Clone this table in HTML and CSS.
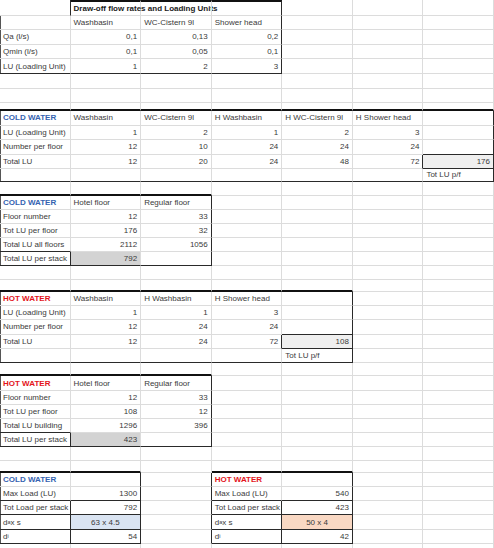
FILE: index.html
```html
<!DOCTYPE html>
<html lang="en">
<head>
    <meta charset="UTF-8">
    <meta name="viewport" content="width=device-width, initial-scale=1.0">
    <title>Draw-off flow rates and Loading Units</title>
    <link rel="stylesheet" href="styles.css">
</head>
<body>
    <div class="sheet">
        <!-- Draw-off flow rates -->
        <div class="row h155">
            <div class="c r"></div>
            <div class="c t2 title">Draw-off flow rates and Loading Units</div>
            <div class="c t2"></div>
            <div class="c t2 r"></div>
            <div class="c"></div><div class="c"></div><div class="c"></div>
        </div>
        <div class="row h145">
            <div class="c l"></div>
            <div class="c">Washbasin</div>
            <div class="c">WC-Cistern 9l</div>
            <div class="c r">Shower head</div>
            <div class="c"></div><div class="c"></div><div class="c"></div>
        </div>
        <div class="row h145">
            <div class="c l">Qa (l/s)</div>
            <div class="c num">0,1</div>
            <div class="c num">0,13</div>
            <div class="c num r">0,2</div>
            <div class="c"></div><div class="c"></div><div class="c"></div>
        </div>
        <div class="row h145">
            <div class="c l">Qmin (l/s)</div>
            <div class="c num">0,1</div>
            <div class="c num">0,05</div>
            <div class="c num r">0,1</div>
            <div class="c"></div><div class="c"></div><div class="c"></div>
        </div>
        <div class="row h15">
            <div class="c l b">LU (Loading Unit)</div>
            <div class="c num b">1</div>
            <div class="c num b">2</div>
            <div class="c num r b">3</div>
            <div class="c"></div><div class="c"></div><div class="c"></div>
        </div>
        <div class="row h15">
            <div class="c"></div><div class="c"></div><div class="c"></div><div class="c"></div><div class="c"></div><div class="c"></div><div class="c"></div>
        </div>
        <div class="row h14">
            <div class="c"></div><div class="c"></div><div class="c"></div><div class="c"></div><div class="c"></div><div class="c"></div><div class="c"></div>
        </div>
        <div class="row h8">
            <div class="c bb"></div><div class="c bb"></div><div class="c bb"></div><div class="c bb"></div><div class="c bb"></div><div class="c bb"></div><div class="c bb"></div>
        </div>

        <!-- Cold water per floor -->
        <div class="row h145">
            <div class="c l cold">COLD WATER</div>
            <div class="c">Washbasin</div>
            <div class="c">WC-Cistern 9l</div>
            <div class="c">H Washbasin</div>
            <div class="c">H WC-Cistern 9l</div>
            <div class="c">H Shower head</div>
            <div class="c r"></div>
        </div>
        <div class="row h145">
            <div class="c l">LU (Loading Unit)</div>
            <div class="c num">1</div>
            <div class="c num">2</div>
            <div class="c num">1</div>
            <div class="c num">2</div>
            <div class="c num">3</div>
            <div class="c r"></div>
        </div>
        <div class="row h145">
            <div class="c l">Number per floor</div>
            <div class="c num">12</div>
            <div class="c num">10</div>
            <div class="c num">24</div>
            <div class="c num">24</div>
            <div class="c num">24</div>
            <div class="c r b"></div>
        </div>
        <div class="row h14">
            <div class="c l">Total LU</div>
            <div class="c num">12</div>
            <div class="c num">20</div>
            <div class="c num">24</div>
            <div class="c num">48</div>
            <div class="c num r">72</div>
            <div class="c num r b g1">176</div>
        </div>
        <div class="row h135">
            <div class="c l b"></div>
            <div class="c b"></div>
            <div class="c b"></div>
            <div class="c b"></div>
            <div class="c b"></div>
            <div class="c b"></div>
            <div class="c r b">Tot LU p/f</div>
        </div>
        <div class="row h14">
            <div class="c bb"></div><div class="c bb"></div><div class="c bb"></div>
            <div class="c"></div><div class="c"></div><div class="c"></div><div class="c"></div>
        </div>

        <!-- Cold water per stack -->
        <div class="row h14">
            <div class="c l cold">COLD WATER</div>
            <div class="c">Hotel floor</div>
            <div class="c r">Regular floor</div>
            <div class="c"></div><div class="c"></div><div class="c"></div><div class="c"></div>
        </div>
        <div class="row h14">
            <div class="c l">Floor number</div>
            <div class="c num">12</div>
            <div class="c num r">33</div>
            <div class="c"></div><div class="c"></div><div class="c"></div><div class="c"></div>
        </div>
        <div class="row h14">
            <div class="c l">Tot LU per floor</div>
            <div class="c num">176</div>
            <div class="c num r">32</div>
            <div class="c"></div><div class="c"></div><div class="c"></div><div class="c"></div>
        </div>
        <div class="row h14">
            <div class="c l b">Total LU all floors</div>
            <div class="c num">2112</div>
            <div class="c num r">1056</div>
            <div class="c"></div><div class="c"></div><div class="c"></div><div class="c"></div>
        </div>
        <div class="row h14">
            <div class="c l r b">Total LU per stack</div>
            <div class="c num b g2">792</div>
            <div class="c r b"></div>
            <div class="c"></div><div class="c"></div><div class="c"></div><div class="c"></div>
        </div>
        <div class="row h14">
            <div class="c"></div><div class="c"></div><div class="c"></div><div class="c"></div><div class="c"></div><div class="c"></div><div class="c"></div>
        </div>
        <div class="row h12">
            <div class="c bb"></div><div class="c bb"></div><div class="c bb"></div><div class="c bb"></div><div class="c bb"></div>
            <div class="c"></div><div class="c"></div>
        </div>

        <!-- Hot water per floor -->
        <div class="row h142">
            <div class="c l hot">HOT WATER</div>
            <div class="c">Washbasin</div>
            <div class="c">H Washbasin</div>
            <div class="c">H Shower head</div>
            <div class="c r"></div>
            <div class="c"></div><div class="c"></div>
        </div>
        <div class="row h142">
            <div class="c l">LU (Loading Unit)</div>
            <div class="c num">1</div>
            <div class="c num">1</div>
            <div class="c num">3</div>
            <div class="c r"></div>
            <div class="c"></div><div class="c"></div>
        </div>
        <div class="row h142">
            <div class="c l">Number per floor</div>
            <div class="c num">12</div>
            <div class="c num">24</div>
            <div class="c num">24</div>
            <div class="c r b"></div>
            <div class="c"></div><div class="c"></div>
        </div>
        <div class="row h142">
            <div class="c l">Total LU</div>
            <div class="c num">12</div>
            <div class="c num">24</div>
            <div class="c num r">72</div>
            <div class="c num r b g1">108</div>
            <div class="c"></div><div class="c"></div>
        </div>
        <div class="row h142">
            <div class="c l b"></div>
            <div class="c b"></div>
            <div class="c b"></div>
            <div class="c b"></div>
            <div class="c r b">Tot LU p/f</div>
            <div class="c"></div><div class="c"></div>
        </div>
        <div class="row h135">
            <div class="c bb"></div><div class="c bb"></div><div class="c bb"></div>
            <div class="c"></div><div class="c"></div><div class="c"></div><div class="c"></div>
        </div>

        <!-- Hot water per stack -->
        <div class="row h142">
            <div class="c l hot">HOT WATER</div>
            <div class="c">Hotel floor</div>
            <div class="c r">Regular floor</div>
            <div class="c"></div><div class="c"></div><div class="c"></div><div class="c"></div>
        </div>
        <div class="row h142">
            <div class="c l">Floor number</div>
            <div class="c num">12</div>
            <div class="c num r">33</div>
            <div class="c"></div><div class="c"></div><div class="c"></div><div class="c"></div>
        </div>
        <div class="row h142">
            <div class="c l">Tot LU per floor</div>
            <div class="c num">108</div>
            <div class="c num r">12</div>
            <div class="c"></div><div class="c"></div><div class="c"></div><div class="c"></div>
        </div>
        <div class="row h142">
            <div class="c l b">Total LU building</div>
            <div class="c num">1296</div>
            <div class="c num r">396</div>
            <div class="c"></div><div class="c"></div><div class="c"></div><div class="c"></div>
        </div>
        <div class="row h142">
            <div class="c l r b">Total LU per stack</div>
            <div class="c num b g2">423</div>
            <div class="c r b"></div>
            <div class="c"></div><div class="c"></div><div class="c"></div><div class="c"></div>
        </div>
        <div class="row h14">
            <div class="c"></div><div class="c"></div><div class="c"></div><div class="c"></div><div class="c"></div><div class="c"></div><div class="c"></div>
        </div>
        <div class="row h115">
            <div class="c bb"></div><div class="c bb"></div><div class="c"></div>
            <div class="c bb"></div><div class="c bb"></div><div class="c"></div><div class="c"></div>
        </div>

        <!-- Pipe sizing -->
        <div class="row h142">
            <div class="c l cold">COLD WATER</div>
            <div class="c r"></div>
            <div class="c r"></div>
            <div class="c hot">HOT WATER</div>
            <div class="c r"></div>
            <div class="c"></div><div class="c"></div>
        </div>
        <div class="row h142">
            <div class="c l b">Max Load (LU)</div>
            <div class="c num r b">1300</div>
            <div class="c r"></div>
            <div class="c b">Max Load (LU)</div>
            <div class="c num r b">540</div>
            <div class="c"></div><div class="c"></div>
        </div>
        <div class="row h142">
            <div class="c l r b">Tot Load per stack</div>
            <div class="c num r b">792</div>
            <div class="c r"></div>
            <div class="c r b">Tot Load per stack</div>
            <div class="c num r b">423</div>
            <div class="c"></div><div class="c"></div>
        </div>
        <div class="row h142">
            <div class="c l r b">d<sub>a</sub> x s</div>
            <div class="c ctr r b blue">63 x 4.5</div>
            <div class="c r"></div>
            <div class="c r b">d<sub>a</sub> x s</div>
            <div class="c ctr r b peach">50 x 4</div>
            <div class="c"></div><div class="c"></div>
        </div>
        <div class="row h142">
            <div class="c l r b">d<sub>i</sub></div>
            <div class="c num r b">54</div>
            <div class="c r"></div>
            <div class="c r b">d<sub>i</sub></div>
            <div class="c num r b">42</div>
            <div class="c"></div><div class="c"></div>
        </div>
        <div class="row h14">
            <div class="c"></div><div class="c"></div><div class="c"></div><div class="c"></div><div class="c"></div><div class="c"></div><div class="c"></div>
        </div>
    </div>
</body>
</html>
```

FILE: styles.css
```css
body {
    margin: 0;
    background-color: #fff;
    font-family: "Liberation Sans", Arial, sans-serif;
    font-size: 8px;
    color: #3a3a3a;
}
.sheet {
    width: 494px;
    height: 548px;
    overflow: hidden;
}
.row {
    display: grid;
    grid-template-columns: repeat(7, minmax(0, 1fr));
}
.h155 { height: 15.5px; }
.h15 { height: 15px; }
.h145 { height: 14.5px; }
.h142 { height: 14.2px; }
.h14 { height: 14px; }
.h135 { height: 13.5px; }
.h12 { height: 12px; }
.h115 { height: 11.5px; }
.h8 { height: 8px; }

.c {
    box-sizing: border-box;
    display: flex;
    align-items: center;
    padding: 0 3px;
    white-space: nowrap;
    min-width: 0;
    border-right: 1px solid #dcdcdc;
    border-bottom: 1px solid #dcdcdc;
}
.c sub {
    font-size: 5.5px;
    vertical-align: -1px;
    line-height: 0;
}
.num {
    justify-content: flex-end;
}
.ctr {
    justify-content: center;
}

/* table borders */
.r { border-right-color: #2a2a2a; }
.b { border-bottom-color: #2a2a2a; }
.bb { border-bottom: 2px solid #111; }
.t2 { border-top: 2px solid #111; }
.l { box-shadow: inset 1px 0 0 #555; }

/* text styles */
.title { font-weight: bold; color: #1a1a1a; }
.cold { color: #3563b0; font-weight: bold; }
.hot { color: #e3141b; font-weight: bold; }

/* fills */
.g1 { background-color: #efefef; }
.g2 { background-color: #d3d3d3; }
.blue { background-color: #dae4f2; }
.peach { background-color: #f9d8c3; }
```
